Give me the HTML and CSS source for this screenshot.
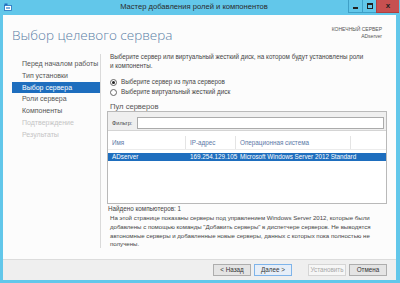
FILE: index.html
```html
<!DOCTYPE html>
<html lang="ru">
<head>
	<meta charset="UTF-8">
	<title>Мастер добавления ролей и компонентов</title>
	<link rel="stylesheet" href="styles.css">
</head>
<body>
	<div class="window">
		<div class="titlebar">
			<svg class="app-icon" width="8" height="8" viewBox="0 0 8 8">
				<rect x="0.5" y="0.5" width="3" height="2" fill="#1e6ebe"/>
				<rect x="0.5" y="2.5" width="7" height="5" fill="#fff" stroke="#1e6ebe" stroke-width="0.8"/>
				<rect x="2" y="4" width="4" height="2" fill="#7fb2e0"/>
			</svg>
			<div class="caption">Мастер добавления ролей и компонентов</div>
			<div class="caption-btns">
				<div class="cbtn cbtn-min"><span></span></div>
				<div class="cbtn cbtn-max"><span></span></div>
				<div class="cbtn cbtn-close">x</div>
			</div>
		</div>

		<div class="client">
			<div class="header">
				<h1>Выбор целевого сервера</h1>
				<div class="target">
					<div>КОНЕЧНЫЙ СЕРВЕР</div>
					<div>ADserver</div>
				</div>
			</div>

			<div class="main">
				<!-- шаги мастера -->
				<ul class="steps">
					<li>Перед началом работы</li>
					<li>Тип установки</li>
					<li class="current">Выбор сервера</li>
					<li>Роли сервера</li>
					<li>Компоненты</li>
					<li class="off">Подтверждение</li>
					<li class="off">Результаты</li>
				</ul>

				<div class="content">
					<p class="intro">Выберите сервер или виртуальный жесткий диск, на котором будут установлены роли и компоненты.</p>

					<div class="radios">
						<label><span class="radio checked"></span>Выберите сервер из пула серверов</label>
						<label><span class="radio"></span>Выберите виртуальный жесткий диск</label>
					</div>

					<div class="pool-title">Пул серверов</div>
					<div class="pool">
						<div class="filter">
							<span>Фильтр:</span>
							<div class="filter-input"></div>
						</div>
						<div class="grid grid-head">
							<div>Имя</div>
							<div>IP-адрес</div>
							<div>Операционная система</div>
							<div></div>
						</div>
						<div class="grid grid-row selected">
							<div>ADserver</div>
							<div>169.254.129.105</div>
							<div>Microsoft Windows Server 2012 Standard</div>
							<div></div>
						</div>
					</div>

					<div class="found">Найдено компьютеров: 1</div>
					<p class="note">На этой странице показаны серверы под управлением Windows Server 2012, которые были добавлены с помощью команды "Добавить серверы" в диспетчере серверов. Не выводятся автономные серверы и добавленные новые серверы, данных с которых пока полностью не получены.</p>
				</div>
			</div>

			<div class="footer">
				<div class="btn">&lt; Назад</div>
				<div class="btn focus">Далее &gt;</div>
				<div class="btn disabled">Установить</div>
				<div class="btn">Отмена</div>
			</div>
		</div>
	</div>
</body>
</html>
```

FILE: styles.css
```css
/* окно мастера в стиле Windows Server 2012 */
html, body {
	margin: 0;
	padding: 0;
}
body {
	font-family: "Liberation Sans", Arial, sans-serif;
	color: #444;
}
.window {
	width: 400px;
	height: 283px;
	background-color: #62c7ea;
	display: flex;
	flex-direction: column;
}

/* заголовок окна */
.titlebar {
	height: 15px;
	display: flex;
	align-items: flex-start;
	position: relative;
}
.app-icon {
	margin: 3px 0 0 4px;
}
.caption {
	flex: 1;
	text-align: center;
	font-size: 7.6px;
	line-height: 13px;
	color: #2a2a2a;
	padding-left: 28px;
}
.caption-btns {
	display: flex;
	margin-right: 1px;
}
.cbtn {
	height: 13px;
	width: 14px;
	box-sizing: border-box;
	border-left: 1px solid #3f9fc6;
	border-bottom: 1px solid #3f9fc6;
	display: flex;
	align-items: center;
	justify-content: center;
}
.cbtn-min span {
	width: 5px;
	height: 2px;
	background: #222;
	margin-top: 3px;
}
.cbtn-max span {
	width: 4px;
	height: 3px;
	border: 1px solid #222;
	border-top-width: 2px;
}
.cbtn-close {
	width: 23px;
	background-color: #c75050;
	border-color: #b04040;
	color: #222;
	font-size: 8px;
	font-weight: bold;
	line-height: 12px;
}

/* рабочая область */
.client {
	flex: 1;
	margin: 0 4px 3px 3px;
	background-color: #fcfcfc;
	display: flex;
	flex-direction: column;
	min-height: 0;
}
.header {
	height: 37px;
	box-sizing: border-box;
	padding: 11px 14px 0 9px;
	display: flex;
	justify-content: space-between;
	align-items: flex-start;
}
.header h1 {
	margin: 0;
	font-family: "Open Sans", "Liberation Sans", sans-serif;
	font-weight: 300;
	font-size: 13.5px;
	line-height: 18px;
	color: #5a7ea6;
}
.target {
	text-align: right;
	font-size: 5px;
	line-height: 7px;
	color: #555;
	padding-top: 0;
}

.main {
	flex: 1;
	display: flex;
	min-height: 0;
}

/* список шагов */
.steps {
	list-style: none;
	margin: 2px 0 11px 0;
	padding: 4px 0 0 9px;
	width: 88px;
	border-right: 1px solid #dadada;
}
.steps li {
	font-size: 7px;
	line-height: 11.8px;
	padding-left: 10px;
	color: #555;
}
.steps li.current {
	background-color: #1e6ebe;
	color: #fff;
}
.steps li.off {
	color: #c4c4c4;
}

.content {
	flex: 1;
	padding: 1px 9px 0 9px;
}
.intro {
	margin: 0;
	font-size: 6.3px;
	line-height: 8.5px;
	padding-right: 20px;
}
.radios {
	margin-top: 7px;
}
.radios label {
	display: flex;
	align-items: center;
	font-size: 6.3px;
	line-height: 10px;
}
.radio {
	width: 5px;
	height: 5px;
	border: 1px solid #666;
	border-radius: 50%;
	margin-right: 4px;
	background: #fff;
	position: relative;
}
.radio.checked:after {
	content: "";
	position: absolute;
	left: 1px;
	top: 1px;
	width: 3px;
	height: 3px;
	border-radius: 50%;
	background: #222;
}
.pool-title {
	margin-top: 5px;
	font-size: 7.6px;
	line-height: 9px;
	color: #555;
}

/* пул серверов */
.pool {
	height: 91px;
	border: 1px solid #b9b9b9;
	background: #fff;
	margin-left: -3px;
}
.filter {
	height: 19px;
	box-sizing: border-box;
	background-color: #efefef;
	border-bottom: 1px solid #d4d4d4;
	display: flex;
	align-items: flex-end;
	padding: 0 2px 1px 4px;
	font-size: 5.6px;
}
.filter span {
	width: 25px;
	line-height: 11px;
	color: #444;
}
.filter-input {
	flex: 1;
	height: 12px;
	box-sizing: border-box;
	background: #fff;
	border: 1px solid #ababab;
}
.grid {
	display: grid;
	grid-template-columns: 78px 50px 115px 1fr;
	font-size: 6.3px;
}
.grid div {
	padding-left: 4px;
	white-space: nowrap;
}
.grid-head {
	height: 18px;
	align-items: end;
	color: #5b78a6;
	border-bottom: 1px solid #ececec;
}
.grid-head div {
	border-right: 1px solid #e4e4e4;
	height: 13px;
	line-height: 13px;
	box-sizing: border-box;
}
.grid-head div:last-child {
	border-right: none;
}
.grid-row {
	margin-top: 3px;
	height: 8px;
	line-height: 8px;
}
.grid-row.selected {
	background-color: #1e6ebe;
	color: #fff;
}

.found {
	font-size: 6.3px;
	line-height: 9px;
	margin-left: -2px;
}
.note {
	margin: 1px 0 0 0;
	font-size: 6.1px;
	line-height: 8.8px;
	padding-right: 8px;
}

/* кнопки внизу */
.footer {
	height: 21px;
	box-sizing: border-box;
	background-color: #efefef;
	border-top: 1px solid #dcdcdc;
	display: flex;
	justify-content: flex-end;
	align-items: flex-start;
	padding: 4px 9px 0 0;
	gap: 3px;
}
.btn {
	width: 38px;
	height: 12px;
	box-sizing: border-box;
	border: 1px solid #adadad;
	background-color: #e4e4e4;
	font-size: 6.3px;
	line-height: 10px;
	text-align: center;
	color: #333;
}
.btn.focus {
	border-color: #7eb4ea;
	background-color: #e6eef8;
}
.btn.disabled {
	margin-left: 13px;
	background-color: #f6f6f6;
	border-color: #d5d5d5;
	color: #a8a8a8;
}
```
